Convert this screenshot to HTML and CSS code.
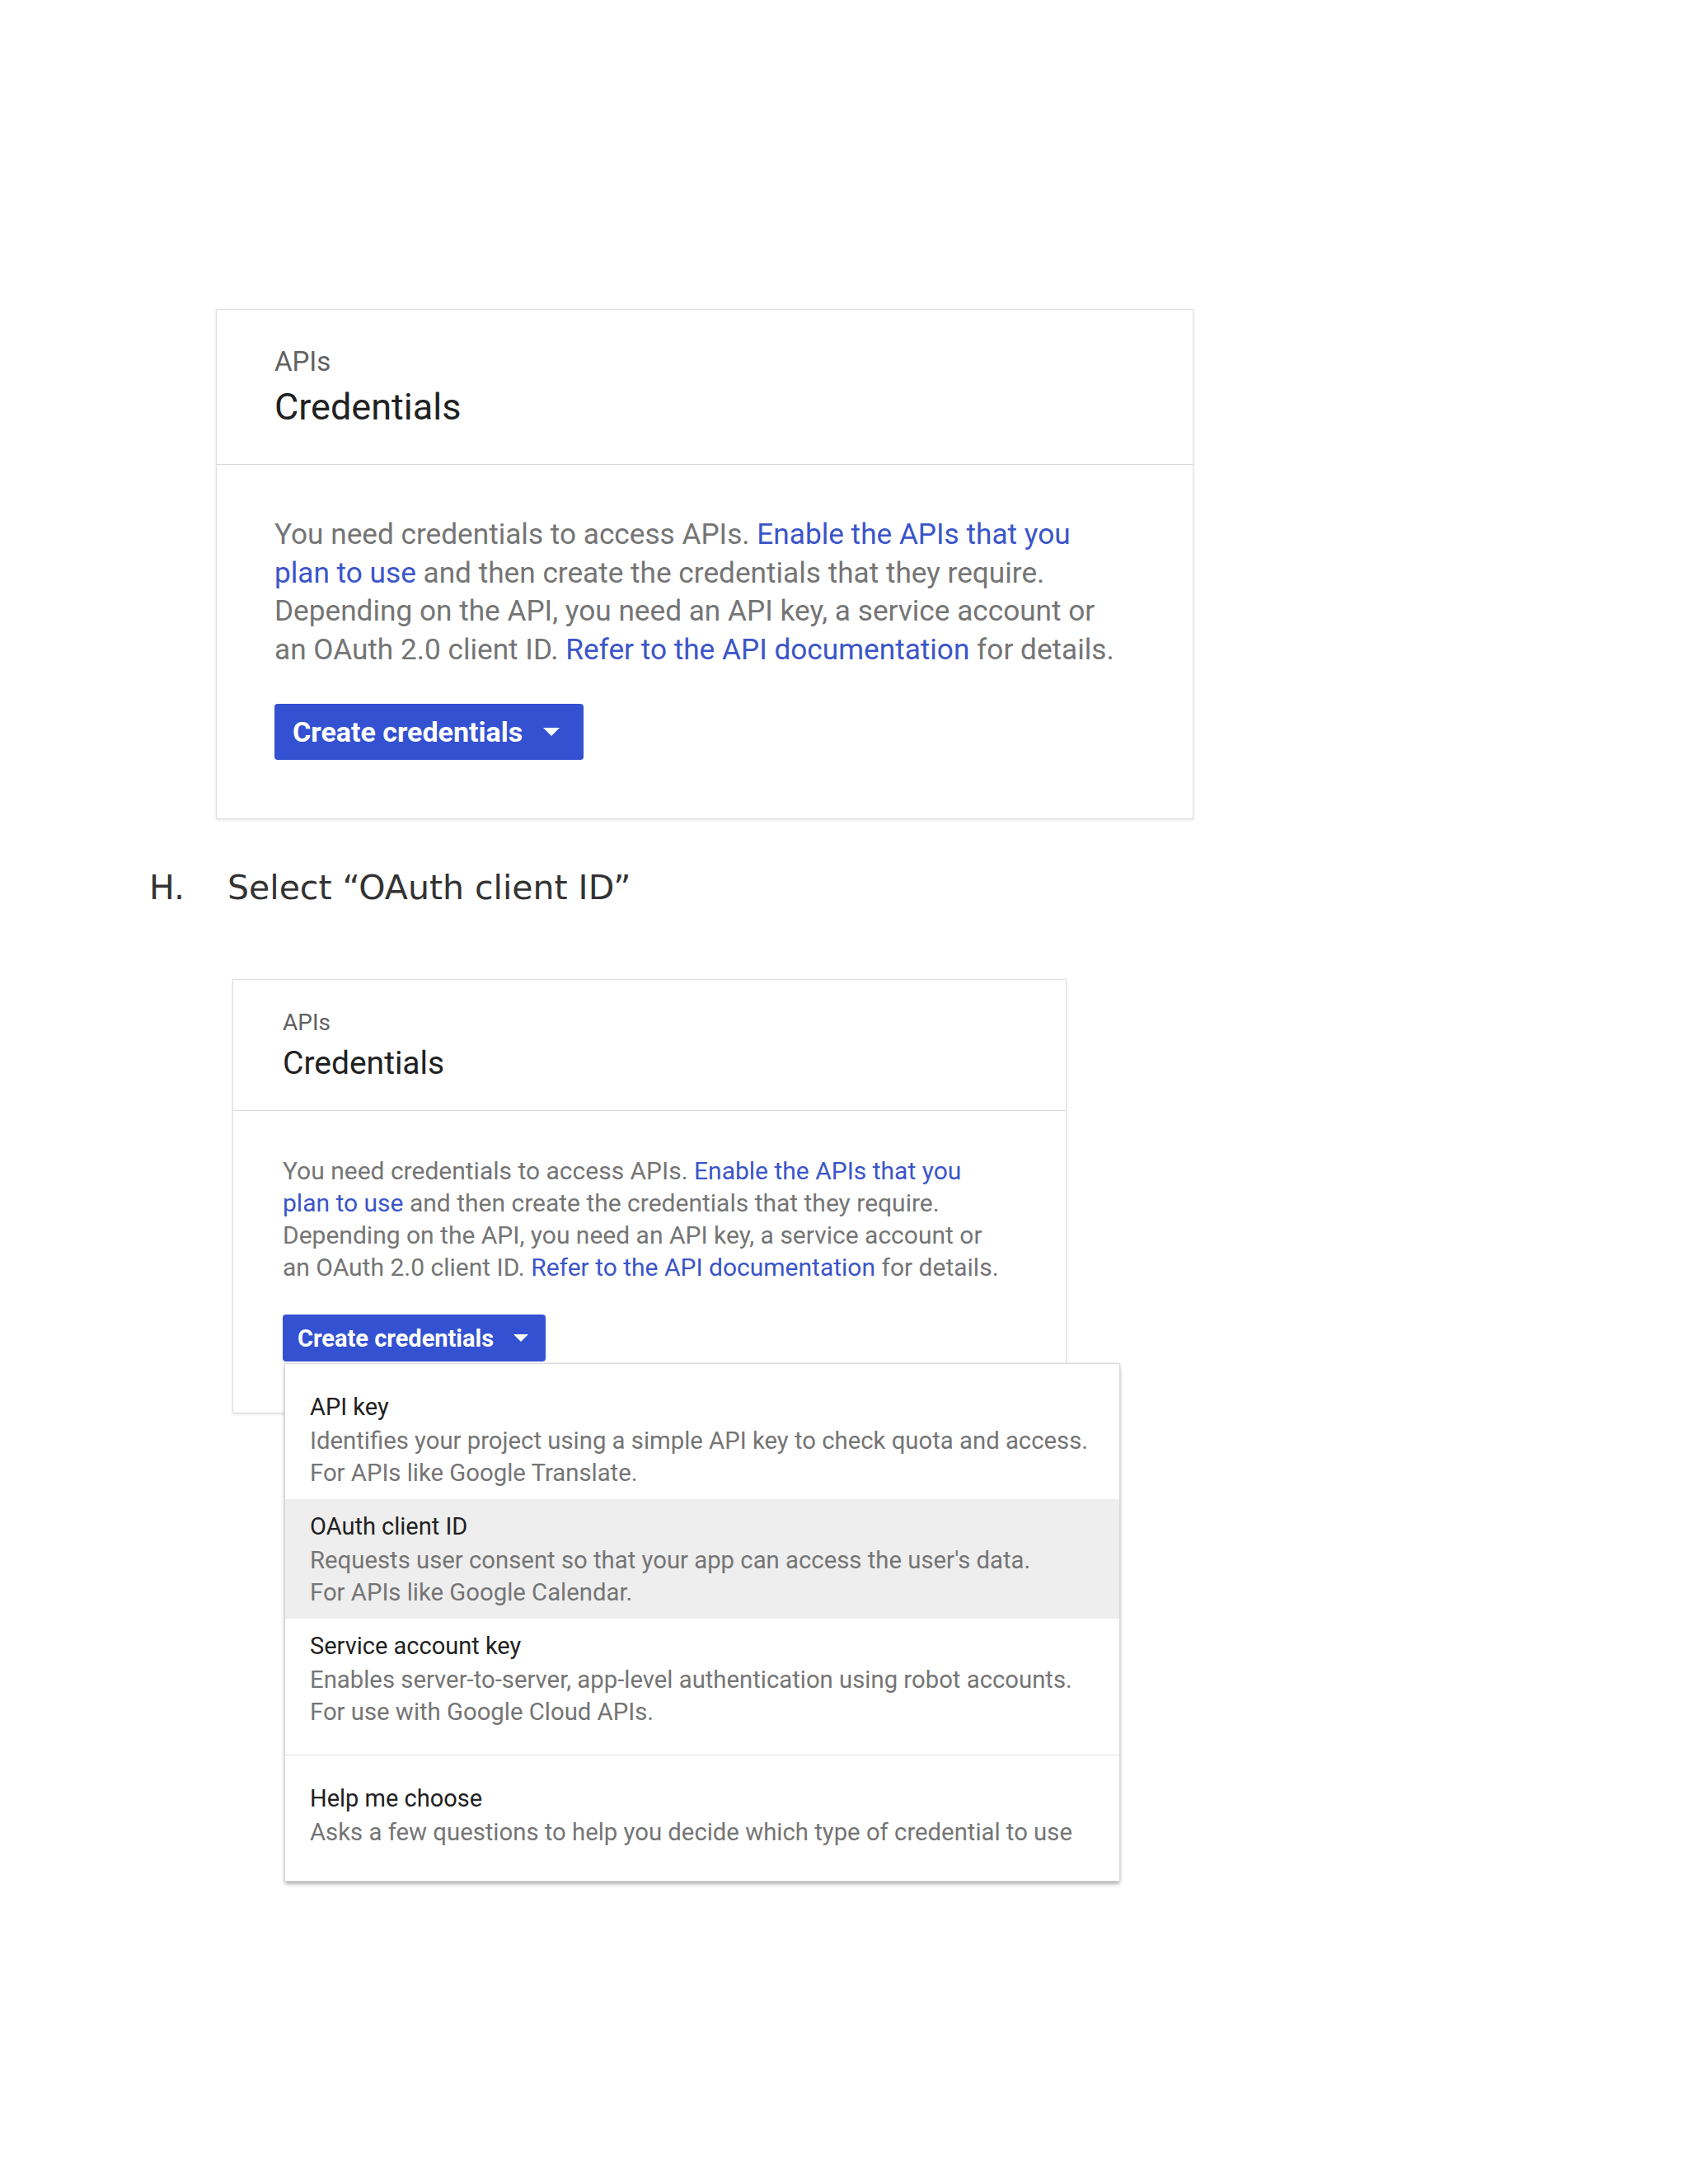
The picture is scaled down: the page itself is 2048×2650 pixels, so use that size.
FILE: index.html
```html
<!DOCTYPE html>
<html lang="en">
<head>
    <meta charset="UTF-8">
    <meta name="viewport" content="width=device-width, initial-scale=1.0">
    <title>Credentials</title>
    <link rel="stylesheet" href="styles.css">
</head>
<body>
    <main class="page">

        <!-- first screenshot: credentials card -->
        <section class="card card-lg">
            <div class="card-head">
                <div class="eyebrow">APIs</div>
                <h2 class="title">Credentials</h2>
            </div>
            <div class="card-body">
                <p class="intro">You need credentials to access APIs. <a href="#">Enable the APIs that you</a><br><a href="#">plan to use</a> and then create the credentials that they require.<br>Depending on the API, you need an API key, a service account or<br>an OAuth 2.0 client ID. <a href="#">Refer to the API documentation</a> for details.</p>
                <button class="btn">Create credentials <span class="caret"></span></button>
            </div>
        </section>

        <p class="step"><span class="step-num">H.</span>Select “OAuth client ID”</p>

        <!-- second screenshot: same card with the menu open -->
        <section class="card card-sm">
            <div class="card-head">
                <div class="eyebrow">APIs</div>
                <h2 class="title">Credentials</h2>
            </div>
            <div class="card-body">
                <p class="intro">You need credentials to access APIs. <a href="#">Enable the APIs that you</a><br><a href="#">plan to use</a> and then create the credentials that they require.<br>Depending on the API, you need an API key, a service account or<br>an OAuth 2.0 client ID. <a href="#">Refer to the API documentation</a> for details.</p>
                <button class="btn">Create credentials <span class="caret"></span></button>
            </div>

            <ul class="menu">
                <li class="menu-item">
                    <div class="item-title">API key</div>
                    <div class="item-desc">Identifies your project using a simple API key to check quota and access.</div>
                    <div class="item-desc">For APIs like Google Translate.</div>
                </li>
                <li class="menu-item active">
                    <div class="item-title">OAuth client ID</div>
                    <div class="item-desc">Requests user consent so that your app can access the user's data.</div>
                    <div class="item-desc">For APIs like Google Calendar.</div>
                </li>
                <li class="menu-item">
                    <div class="item-title">Service account key</div>
                    <div class="item-desc">Enables server-to-server, app-level authentication using robot accounts.</div>
                    <div class="item-desc">For use with Google Cloud APIs.</div>
                </li>
                <li class="menu-sep"></li>
                <li class="menu-item">
                    <div class="item-title">Help me choose</div>
                    <div class="item-desc">Asks a few questions to help you decide which type of credential to use</div>
                </li>
            </ul>
        </section>

    </main>
</body>
</html>
```

FILE: styles.css
```css
* {
    box-sizing: border-box;
}

body {
    margin: 0;
    background-color: #fff;
    font-family: Roboto, "Liberation Sans", sans-serif;
    color: #212121;
}

.page {
    min-height: 2650px;
    padding: 375px 0 700px;
}

/* cards */
.card {
    position: relative;
    background-color: #fff;
    border: 1px solid #dedede;
    box-shadow: 0 1px 3px rgba(0, 0, 0, 0.12);
}

.card-head {
    border-bottom: 1px solid #d8d8d8;
}

.eyebrow {
    color: #616161;
}

.title {
    margin: 0;
    font-weight: 400;
    color: #212121;
}

.intro {
    margin: 0;
    color: #757575;
    white-space: nowrap;
}

    .intro a {
        color: #3b55c9;
        text-decoration: none;
    }

.btn {
    display: inline-flex;
    align-items: center;
    border: none;
    border-radius: 4px;
    background-color: #3451d1;
    color: #fff;
    font-family: Roboto, "Liberation Sans", sans-serif;
    font-weight: 700;
    cursor: pointer;
}

.caret {
    width: 0;
    height: 0;
    border-left: 10px solid transparent;
    border-right: 10px solid transparent;
    border-top: 10px solid #fff;
}

/* big card */
.card-lg {
    margin-left: 262px;
    width: 1186px;
}

    .card-lg .card-head {
        padding: 43px 70px 42px;
    }

    .card-lg .eyebrow {
        font-size: 33px;
        line-height: 40px;
    }

    .card-lg .title {
        margin-top: 8px;
        font-size: 45px;
        line-height: 54px;
    }

    .card-lg .card-body {
        padding: 61px 70px 71px;
    }

    .card-lg .intro {
        font-size: 35.2px;
        line-height: 46.5px;
        margin-bottom: 43px;
    }

    .card-lg .btn {
        height: 68px;
        padding: 0 29px 0 22px;
        font-size: 34px;
        gap: 25px;
    }

/* step line */
.step {
    margin: 58px 0 0 181px;
    font-family: "DejaVu Sans", Verdana, sans-serif;
    font-size: 41px;
    line-height: 50px;
    color: #333;
}

.step-num {
    display: inline-block;
    width: 95px;
}

/* small card */
.card-sm {
    margin: 86px 0 0 282px;
    width: 1012px;
}

    .card-sm .card-head {
        padding: 35px 60px 34px;
    }

    .card-sm .eyebrow {
        font-size: 28px;
        line-height: 34px;
    }

    .card-sm .title {
        margin-top: 9px;
        font-size: 39px;
        line-height: 46px;
    }

    .card-sm .card-body {
        padding: 53px 60px 62px;
    }

    .card-sm .intro {
        font-size: 30px;
        line-height: 39px;
        margin-bottom: 38px;
    }

    .card-sm .btn {
        height: 57px;
        padding: 0 21px 0 18px;
        font-size: 29px;
        gap: 24px;
    }

    .card-sm .caret {
        border-left-width: 9px;
        border-right-width: 9px;
        border-top-width: 9px;
    }

/* dropdown menu */
.menu {
    position: absolute;
    left: 62px;
    top: 465px;
    width: 1014px;
    margin: 0;
    padding: 19px 0 27px;
    list-style: none;
    background-color: #fff;
    border: 1px solid #d9d9d9;
    box-shadow: 0 4px 5px -1px rgba(0, 0, 0, 0.3), 0 0 3px rgba(0, 0, 0, 0.12);
}

.menu-item {
    padding: 12px 30px 12px;
}

    .menu-item.active {
        background-color: #eeeeee;
    }

.item-title {
    font-size: 29px;
    line-height: 43px;
    color: #212121;
}

.item-desc {
    font-size: 29.3px;
    line-height: 39px;
    color: #757575;
    white-space: nowrap;
}

.menu-sep {
    margin: 20px 0 19px;
    border-top: 1px solid #e0e0e0;
}
```
